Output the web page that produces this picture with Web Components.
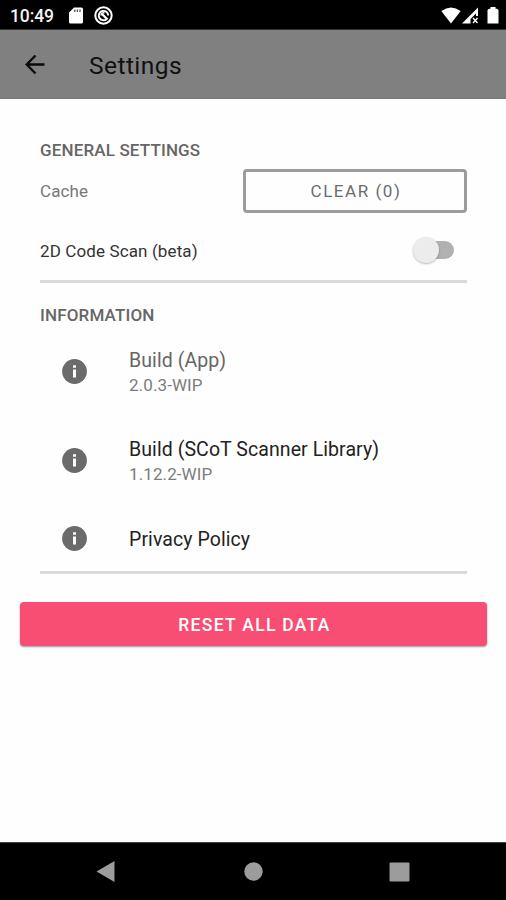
<!DOCTYPE html>
<html lang="en">
<head>
<meta charset="utf-8">
<title>Settings</title>
<style>
html,body{margin:0;height:100%}
body{background:#fefefe;font-family:Roboto,"Noto Sans",sans-serif;overflow:hidden}
</style>
</head>
<body>
<settings-screen></settings-screen>
<script>
const define = (name, html) => {
  const t = document.createElement('template');
  t.innerHTML = html;
  customElements.define(name, class extends HTMLElement {
    constructor() {
      super();
      this.attachShadow({mode: 'open'}).append(t.content.cloneNode(true));
    }
  });
};

define('status-bar', `
<style>
:host{display:flex;align-items:center;height:30px;box-sizing:border-box;background:#000;color:#f4f4f4;padding:2px 7px 0 10px;font-size:17.500px;font-weight:500;border-bottom:1px solid #333}
span{width:59px;letter-spacing:-.1px}
svg{display:block;flex:none}
.gap{flex:1}
</style>
<span>10:49</span>
<svg width="14" height="17" viewBox="0 0 14 17"><path d="M5 .5h7.500a1.500 1.500 0 0 1 1.500 1.500v13a1.500 1.500 0 0 1-1.500 1.500h-11A1.500 1.500 0 0 1 0 15V5.500z" fill="#fff"/><path d="M5.800 2.500v2.500M8.400 2.500v2.500M11 2.500v2.500" stroke="#555" stroke-width="1.300"/></svg>
<svg style="margin-left:11px" width="19" height="19" viewBox="0 0 19 19" fill="none" stroke="#fff"><circle cx="9.500" cy="9.500" r="8.200" stroke-width="2"/><path d="M12.500 13.200A4.700 4.700 0 1 1 14.200 9.500" stroke-width="1.900"/><path d="M8 8l5.500 5.500" stroke-width="2.300"/><path d="M7 9.500a2.500 2.500 0 0 1 3.500-2.500" stroke-width="1.500"/></svg>
<div class="gap"></div>
<svg width="20" height="17" viewBox="0 0 20 17"><path d="M.3 4Q10-3.200 19.700 4L10 16.500z" fill="#fff"/></svg>
<svg style="margin-left:1px" width="17" height="17" viewBox="0 0 17 17"><path d="M0 16.500L16 .5V9h-2V6.500L8.500 12v4.500z" fill="#fff"/><path d="M11 11l4.500 5M15.500 11l-4.500 5" stroke="#fff" stroke-width="1.400"/></svg>
<svg style="margin-left:8px" width="12" height="17" viewBox="0 0 12 17"><path d="M3.500 0h5v1.700H10L11.500 3v13.500H.5V3L2 1.700h1.500z" fill="#fff"/></svg>
`);

define('app-bar', `
<style>
:host{display:flex;align-items:center;height:69px;box-sizing:border-box;background:#808080;border-bottom:1px solid #777;padding:2px 0 0 25px;color:#111}
h1{margin:1px 0 0 44px;font-size:24.500px;font-weight:450;letter-spacing:.45px;line-height:30px}
svg{display:block}
</style>
<svg width="20" height="20" viewBox="0 0 20 20" fill="none" stroke="#0a0a0a" stroke-width="2.300"><path d="M19.500 9.500H2M10.500 .5L1.700 9.500l8.800 9"/></svg>
<h1><slot></slot></h1>
`);

define('section-title', `
<style>
:host{display:block;height:20px;line-height:19px;font-size:17px;font-weight:500;color:#666;letter-spacing:.15px;white-space:nowrap}
</style><slot></slot>`);

define('setting-row', `
<style>
:host{display:flex;align-items:center;justify-content:space-between;height:44px;font-size:17px;letter-spacing:.12px;color:#777;white-space:nowrap}
</style><slot></slot><slot name="control"></slot>`);

define('outline-button', `
<style>
:host{display:flex;align-items:center;justify-content:center;box-sizing:border-box;width:224px;height:44px;border:3px solid #9c9c9c;border-radius:4px;color:#6c6c6c;font-size:17px;font-weight:450;letter-spacing:1.550px;padding:0 0 0 2px}
</style><slot></slot>`);

define('toggle-switch', `
<style>
:host{display:flex;align-items:center;margin-right:13px}
i{width:26px;height:26px;border-radius:50%;background:#ececec;box-shadow:0 1px 2px #0004;z-index:1}
b{width:34px;height:18px;border-radius:9px;background:#b1b1b1;margin-left:-19px}
</style><i></i><b></b>`);

define('divider-line', `
<style>:host{display:block;height:3px;background:#dadada}</style>`);

define('info-item', `
<style>
:host{display:flex;align-items:center;padding-left:22px;color:#222;height:var(--h,50px);white-space:nowrap}
svg{display:block;width:25px;height:25px;margin:-1px 42px 0 0}
.t{font-size:19.500px;line-height:25px;letter-spacing:.08px}
::slotted([slot=version]){display:block;font-size:17px;line-height:24px;color:#7c7c7c;letter-spacing:.1px}
</style>
<svg viewBox="0 0 25 25"><circle cx="12.500" cy="12.500" r="12.400" fill="#6b6b6b"/><path d="M11 6.200h3v2.500h-3zM11 10.500h3v8h-3z" fill="#fff"/></svg>
<div><div class="t"><slot></slot></div><slot name="version"></slot></div>
`);

define('reset-button', `
<style>
:host{display:flex;align-items:center;justify-content:center;height:44px;margin:0 19px 0 20px;border-radius:4px;background:#f84e73;box-shadow:0 1px 2px #0006;color:#fff;font-size:17.500px;font-weight:500;letter-spacing:1.300px;box-sizing:border-box;padding:2px 0 0 2px}
</style><slot></slot>`);

define('nav-bar', `
<style>
:host{display:flex;align-items:center;justify-content:space-between;height:58px;box-sizing:border-box;background:#000;border-top:1px solid #444;padding:0 96px}
svg{display:block}
svg:nth-of-type(2){margin-left:2px}
</style>
<svg width="19" height="21" viewBox="0 0 19 21"><path d="M.5 10.500L18.500 0v21z" fill="#9c9c9c"/></svg>
<svg width="19" height="19" viewBox="0 0 19 19"><circle cx="9.500" cy="9.500" r="9.200" fill="#9c9c9c"/></svg>
<svg width="21" height="20" viewBox="0 0 21 20"><rect x=".5" y=".5" width="20" height="19" rx="1" fill="#9c9c9c"/></svg>
`);

define('settings-screen', `
<style>
:host{display:flex;flex-direction:column;height:900px;width:506px}
main{flex:1}
section{margin:0 39px 0 40px}
.general{padding-top:42px}
.info{padding-top:23px}
.scan{color:#333;margin-top:15px}
.scan span{padding-top:2px}
</style>
<status-bar></status-bar>
<app-bar>Settings</app-bar>
<main>
<section class="general">
<section-title>GENERAL SETTINGS</section-title>
<setting-row style="margin-top:8px"><span>Cache</span><outline-button slot="control">CLEAR (0)</outline-button></setting-row>
<setting-row class="scan"><span>2D Code Scan (beta)</span><toggle-switch slot="control"></toggle-switch></setting-row>
<divider-line style="margin-top:8px"></divider-line>
</section>
<section class="info">
<section-title>INFORMATION</section-title>
<info-item style="margin-top:21px;color:#666">Build (App)<span slot="version">2.0.3-WIP</span></info-item>
<info-item style="margin-top:39px">Build (SCoT Scanner Library)<span slot="version">1.12.2-WIP</span></info-item>
<info-item style="margin-top:40px;--h:26px">Privacy Policy</info-item>
<divider-line style="margin-top:19px"></divider-line>
</section>
<reset-button style="margin-top:28px">RESET ALL DATA</reset-button>
</main>
<nav-bar></nav-bar>
`);
</script>
</body>
</html>
